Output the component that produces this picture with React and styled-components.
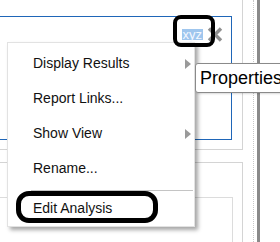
import React from "react";
import styled, { createGlobalStyle } from "styled-components";

const GlobalStyle = createGlobalStyle`
  html, body {
    margin: 0;
    padding: 0;
    background: #fff;
  }
  body {
    font-family: "Liberation Sans", Arial, sans-serif;
  }
`;

const Page = styled.div`
  position: relative;
  display: flex;
  width: 280px;
  height: 242px;
  overflow: hidden;
  background: #fff;
`;

const Main = styled.div`
  display: flex;
  flex-direction: column;
  width: 243px;
  flex-shrink: 0;
`;

const TopPanel = styled.div`
  box-sizing: border-box;
  height: 150px;
  padding: 16px 10px 9px 0;
  border-right: 1px solid #d4d4d4;
  border-bottom: 1px solid #d4d4d4;
`;

const BluePanel = styled.div`
  box-sizing: border-box;
  height: 124px;
  border: 1px solid #1f66b8;
  border-left: none;
`;

const PanelHeader = styled.div`
  display: flex;
  justify-content: flex-end;
  align-items: center;
  gap: 4px;
  padding: 10px 8px 0 0;
`;

const Title = styled.span`
  font-size: 13px;
  line-height: 11px;
  height: 11px;
  padding: 0 1px;
  color: #f4f8ff;
  background: #9fc6ee;
`;

const CloseIcon = styled.svg`
  display: block;
  width: 16px;
  height: 15px;
`;

const BottomPanel = styled.div`
  box-sizing: border-box;
  flex: 1;
  margin-top: 12px;
  padding: 34px 9px 0 0;
  border-top: 1px solid #d4d4d4;
  border-right: 1px solid #d4d4d4;
  display: flex;
  flex-direction: column;
`;

const InnerPanel = styled.div`
  flex: 1;
  border-top: 1px solid #dcdcdc;
  border-right: 1px solid #dcdcdc;
`;

const Dotted = styled.div`
  width: 0;
  margin-left: 10px;
  border-left: 1px dotted #c8c8c8;
`;

const Splitter = styled.div`
  width: 3px;
  margin-left: 3px;
  background: #8a8a8a;
`;

const Menu = styled.div`
  position: absolute;
  left: 7px;
  top: 42px;
  box-sizing: border-box;
  width: 188px;
  padding-top: 3px;
  background: #fff;
  border: 1px solid #e2e2e2;
  box-shadow: 3px 3px 4px rgba(0, 0, 0, 0.35);
`;

const Item = styled.div`
  position: relative;
  height: 35px;
  line-height: 35px;
  padding-left: 25px;
  font-size: 14px;
  color: #111;
  white-space: nowrap;
`;

const Arrow = styled.span`
  position: absolute;
  right: 3px;
  top: 13px;
  width: 0;
  height: 0;
  border-left: 6px solid #9a9a9a;
  border-top: 5px solid transparent;
  border-bottom: 5px solid transparent;
`;

const Separator = styled.div`
  height: 1px;
  margin: 4px 1px 0 23px;
  background: #c4c4c4;
`;

const Tooltip = styled.div`
  position: absolute;
  left: 195px;
  top: 63px;
  box-sizing: border-box;
  height: 30px;
  padding: 0 8px 0 4px;
  background: #fff;
  border: 1px solid #8a8a8a;
  border-radius: 3px;
  box-shadow: 1px 1px 2px rgba(0, 0, 0, 0.15);
  font-size: 18px;
  line-height: 28px;
  color: #000;
  white-space: nowrap;
`;

const Callout = styled.div`
  position: absolute;
  left: ${(p) => p.$x}px;
  top: ${(p) => p.$y}px;
  width: ${(p) => p.$w}px;
  height: ${(p) => p.$h}px;
  box-sizing: border-box;
  border: ${(p) => p.$stroke}px solid #000;
  border-radius: ${(p) => p.$r}px;
  pointer-events: none;
`;

const items = [
  { label: "Display Results", sub: true },
  { label: "Report Links..." },
  { label: "Show View", sub: true },
  { label: "Rename..." },
];

export default function App() {
  return (
    <>
      <GlobalStyle />
      <Page>
        <Main>
          <TopPanel>
            <BluePanel>
              <PanelHeader>
                <Title>xyz</Title>
                <CloseIcon viewBox="0 0 16 15">
                  <path
                    d="M2 1.5 L14 13.5 M14 1.5 L2 13.5"
                    stroke="#8f8f8f"
                    strokeWidth="3.4"
                  />
                </CloseIcon>
              </PanelHeader>
            </BluePanel>
          </TopPanel>
          <BottomPanel>
            <InnerPanel />
          </BottomPanel>
        </Main>
        <Dotted />
        <Splitter />

        <Menu>
          {items.map((it) => (
            <Item key={it.label}>
              {it.label}
              {it.sub && <Arrow />}
            </Item>
          ))}
          <Separator />
          <Item>Edit Analysis</Item>
        </Menu>

        <Tooltip>Properties</Tooltip>

        <Callout $x={173} $y={15} $w={42} $h={32} $r={8} $stroke={4} />
        <Callout $x={16} $y={191} $w={142} $h={32} $r={13} $stroke={5} />
      </Page>
    </>
  );
}
